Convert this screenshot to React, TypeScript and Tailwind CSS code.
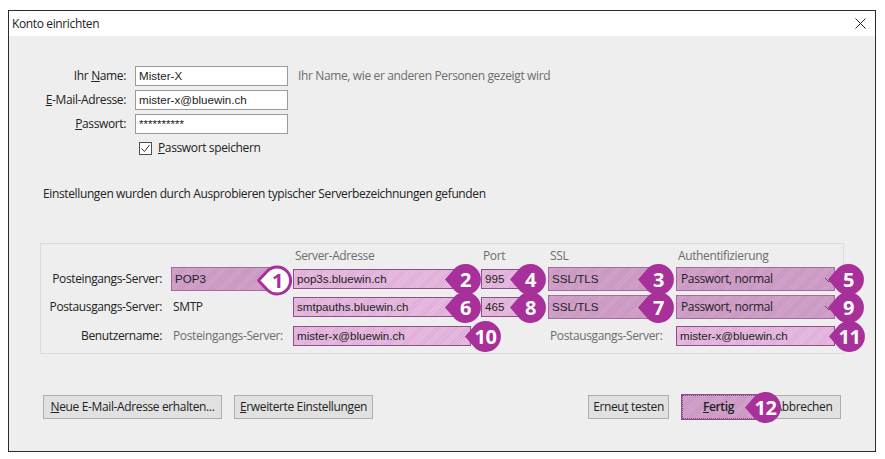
import { ReactNode } from 'react';

const inputHatch =
  'border border-[#8e4f88] bg-[repeating-linear-gradient(135deg,#e7bde1_0,#e7bde1_1px,#deadd7_1px,#deadd7_2px)]';
const comboHatch =
  'border border-[#a56a9f] bg-[repeating-linear-gradient(135deg,#d2a3cb_0,#d2a3cb_1px,#c896c1_1px,#c896c1_2px)]';

function Badge({ label, className, outlined }: { label: string; className: string; outlined?: boolean }) {
  return (
    <div className={`absolute z-10 flex h-[31px] w-[36px] items-center justify-center pl-[5px] ${className}`}>
      <svg viewBox="0 0 36 31" className="absolute inset-0 h-full w-full overflow-visible">
        {outlined ? (
          <path d="M1.5 15.5 L10.5 6 A13.5 13.5 0 1 1 10.5 25 Z" fill="#fff" stroke="#a7309a" strokeWidth="3" strokeLinejoin="round" />
        ) : (
          <path d="M0 15.5 L10 4 A15.5 15.5 0 1 1 10 27 Z" fill="#a7309a" />
        )}
      </svg>
      <span
        className={`relative font-['Open_Sans',sans-serif] text-[20px] font-bold tracking-[-0.5px] ${
          outlined ? 'text-[#a7309a]' : 'text-white'
        }`}
      >
        {label}
      </span>
    </div>
  );
}

function FormRow({ label, value }: { label: ReactNode; value: string }) {
  return (
    <div className="flex h-5 items-center">
      <div className="w-[108px] text-right">{label}</div>
      <div className="ml-[9px] flex h-5 w-[153px] items-center border border-[#9a9a9a] bg-white px-[3px] font-['Liberation_Sans',sans-serif] text-[11.6px] tracking-normal text-[#222]">
        {value}
      </div>
    </div>
  );
}

function Field({ children, badge, className }: { children?: ReactNode; badge: ReactNode; className: string }) {
  return (
    <div className={`relative flex items-center font-['Liberation_Sans',sans-serif] text-[11.6px] tracking-normal text-[#222] ${className}`}>
      {children}
      {badge}
    </div>
  );
}

function Chevron() {
  return (
    <svg viewBox="0 0 10 6" className="absolute left-[147px] top-[9px] h-[6px] w-[10px]" fill="none" stroke="#6b4a68" strokeWidth="1">
      <path d="M1 1 L5 5 L9 1" />
    </svg>
  );
}

function PlainButton({ children, className }: { children: ReactNode; className: string }) {
  return (
    <button className={`flex h-6 items-center justify-center border border-[#adadad] bg-[#e1e1e1] text-[#222] ${className}`}>
      {children}
    </button>
  );
}

export default function App() {
  return (
    <div className="h-[459px] w-[885px] overflow-hidden bg-white pl-2 pt-2.5 font-['Open_Sans',sans-serif] text-[12px] leading-[18px] tracking-[-0.37px] text-[#222]">
      <div className="flex h-[442px] w-[868px] flex-col border border-[#2b2b2b] bg-[#eeeeee]">
        {/* Title bar */}
        <div className="flex h-[25px] items-center justify-between bg-white pl-[3px] pr-[9px]">
          <span>Konto einrichten</span>
          <svg viewBox="0 0 11 11" className="h-[11px] w-[11px]" fill="none" stroke="#222" strokeWidth="1">
            <path d="M0.5 0.5 L10.5 10.5 M10.5 0.5 L0.5 10.5" />
          </svg>
        </div>

        <div className="flex flex-col pl-[31px] pt-[30px]">
          {/* Account form */}
          <div className="-ml-[22px] flex flex-col gap-1">
            <div className="flex items-center">
              <FormRow label={<>Ihr <u>N</u>ame:</>} value="Mister-X" />
              <span className="ml-[10px] text-[#6d6d6d]">Ihr Name, wie er anderen Personen gezeigt wird</span>
            </div>
            <FormRow label={<><u>E</u>-Mail-Adresse:</>} value="mister-x@bluewin.ch" />
            <FormRow label={<><u>P</u>asswort:</>} value="**********" />
          </div>
          <div className="-ml-[22px] mt-[7px] flex h-[14px] items-center pl-[121px]">
            <div className="flex h-[13px] w-[13px] items-center justify-center border border-[#4d4d4d] bg-white">
              <svg viewBox="0 0 11 11" className="h-[11px] w-[11px]" fill="none" stroke="#333" strokeWidth="1">
                <path d="M1.5 5.5 L4.5 8.5 L9.5 2" />
              </svg>
            </div>
            <span className="ml-[6px]"><u>P</u>asswort speichern</span>
          </div>

          <p className="ml-[3px] mt-[30px]">Einstellungen wurden durch Ausprobieren typischer Serverbezeichnungen gefunden</p>

          {/* Server settings */}
          <div className="mt-10 grid w-[804px] grid-cols-[130px_122px_188px_67px_128px_159px] grid-rows-[23px_28px_31px_20px] items-start border border-[#dcdcdc] pb-[7px]">
            <div />
            <div />
            <div className="pl-[2px] pt-[3px] text-[#6d6d6d]">Server-Adresse</div>
            <div className="pl-[2px] pt-[3px] text-[#6d6d6d]">Port</div>
            <div className="pl-[2px] pt-[3px] text-[#6d6d6d]">SSL</div>
            <div className="pl-[2px] pt-[3px] text-[#6d6d6d]">Authentifizierung</div>

            <div className="flex h-6 items-center justify-end pr-[9px]">Posteingangs-Server:</div>
            <Field className={`h-6 w-[112px] pl-[3px] ${comboHatch}`} badge={<Badge label="1" outlined className="left-[85px] top-[-3px]" />}>POP3</Field>
            <Field className={`mt-[2px] h-5 w-[178px] pl-[3px] ${inputHatch}`} badge={<Badge label="2" className="left-[151px] top-[-6px]" />}>pop3s.bluewin.ch</Field>
            <Field className={`mt-[2px] h-5 w-[40px] pl-[3px] ${inputHatch}`} badge={<Badge label="4" className="left-[28px] top-[-6px]" />}>995</Field>
            <Field className={`h-6 w-[115px] pl-[3px] ${comboHatch}`} badge={<Badge label="3" className="left-[89px] top-[-4px]" />}>SSL/TLS</Field>
            <Field className={`h-6 w-[159px] pl-[4px] ${comboHatch}`} badge={<><Chevron /><Badge label="5" className="left-[151px] top-[-4px]" /></>}>
              <span className="font-['Open_Sans',sans-serif] text-[12px] tracking-[-0.37px]">Passwort, normal</span>
            </Field>

            <div className="flex h-6 items-center justify-end pr-[9px]">Postausgangs-Server:</div>
            <div className="flex h-6 items-center pl-[2px]">SMTP</div>
            <Field className={`mt-[2px] h-5 w-[178px] pl-[3px] ${inputHatch}`} badge={<Badge label="6" className="left-[151px] top-[-6px]" />}>smtpauths.bluewin.ch</Field>
            <Field className={`mt-[2px] h-5 w-[40px] pl-[3px] ${inputHatch}`} badge={<Badge label="8" className="left-[28px] top-[-6px]" />}>465</Field>
            <Field className={`h-6 w-[115px] pl-[3px] ${comboHatch}`} badge={<Badge label="7" className="left-[89px] top-[-4px]" />}>SSL/TLS</Field>
            <Field className={`h-6 w-[159px] pl-[4px] ${comboHatch}`} badge={<><Chevron /><Badge label="9" className="left-[151px] top-[-4px]" /></>}>
              <span className="font-['Open_Sans',sans-serif] text-[12px] tracking-[-0.37px]">Passwort, normal</span>
            </Field>

            <div className="flex h-5 items-center justify-end pr-[9px]">Benutzername:</div>
            <div className="flex h-5 items-center pl-[2px] text-[#6d6d6d]">Posteingangs-Server:</div>
            <Field className={`h-5 w-[178px] pl-[3px] ${inputHatch}`} badge={<Badge label="10" className="left-[171px] top-[-6px]" />}>mister-x@bluewin.ch</Field>
            <div />
            <div className="flex h-5 items-center pl-[2px] text-[#6d6d6d]">Postausgangs-Server:</div>
            <Field className={`h-5 w-[159px] pl-[3px] ${inputHatch}`} badge={<Badge label="11" className="left-[152px] top-[-6px]" />}>mister-x@bluewin.ch</Field>
          </div>

          {/* Buttons */}
          <div className="ml-[3px] mt-[41px] flex w-[798px] items-center">
            <PlainButton className="w-[179px]"><span><u>N</u>eue E-Mail-Adresse erhalten...</span></PlainButton>
            <PlainButton className="ml-3 w-[139px]"><span><u>E</u>rweiterte Einstellungen</span></PlainButton>
            <PlainButton className="ml-auto w-[81px]"><span>Erneu<u>t</u> testen</span></PlainButton>
            <div className="relative z-10 ml-[13px] flex h-6 w-[76px] items-center justify-center border border-dotted border-[#8e3f86] bg-[repeating-linear-gradient(135deg,#d2a3cb_0,#d2a3cb_1px,#c896c1_1px,#c896c1_2px)] pr-[3px] font-semibold outline outline-1 outline-[#8e4f88]">
              <span><u>F</u>ertig</span>
              <Badge label="12" className="left-[62px] top-[-4px]" />
            </div>
            <PlainButton className="w-[83px] pl-[8px]"><span>Abbrechen</span></PlainButton>
          </div>
        </div>
      </div>
    </div>
  );
}
